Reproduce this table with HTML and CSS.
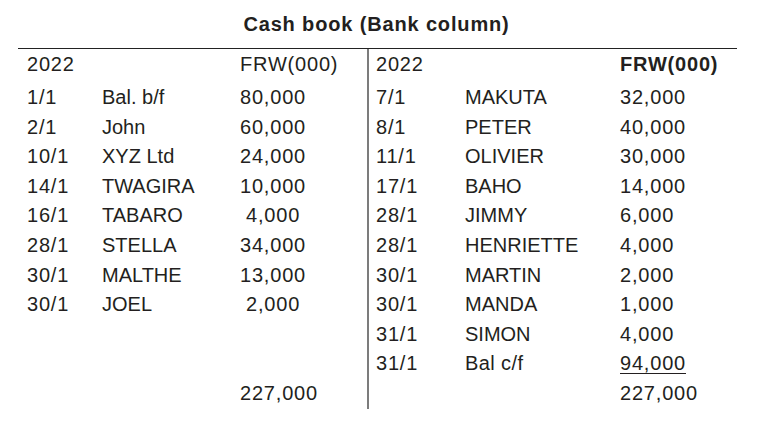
FILE: index.html
```html
<!DOCTYPE html>
<html lang="en">
<head>
<meta charset="utf-8">
<title>Cash book (Bank column)</title>
<link rel="stylesheet" href="styles.css">
</head>
<body>
<div class="page">
  <h1 class="title">Cash book (Bank column)</h1>
  <div class="ledger">
    <div class="side debit">
      <div class="row head"><span class="num">2022</span><span></span><span class="num">FRW(000)</span></div>
      <div class="row"><span class="num">1/1</span><span>Bal. b/f</span><span class="num">80,000</span></div>
      <div class="row"><span class="num">2/1</span><span>John</span><span class="num">60,000</span></div>
      <div class="row"><span class="num">10/1</span><span>XYZ Ltd</span><span class="num">24,000</span></div>
      <div class="row"><span class="num">14/1</span><span>TWAGIRA</span><span class="num">10,000</span></div>
      <div class="row"><span class="num">16/1</span><span>TABARO</span><span class="num short">4,000</span></div>
      <div class="row"><span class="num">28/1</span><span>STELLA</span><span class="num">34,000</span></div>
      <div class="row"><span class="num">30/1</span><span>MALTHE</span><span class="num">13,000</span></div>
      <div class="row"><span class="num">30/1</span><span>JOEL</span><span class="num short">2,000</span></div>
      <div class="row"><span></span><span></span><span></span></div>
      <div class="row"><span></span><span></span><span></span></div>
      <div class="row"><span></span><span></span><span class="num">227,000</span></div>
    </div>
    <div class="side credit">
      <div class="row head"><span class="num">2022</span><span></span><span class="num bold">FRW(000)</span></div>
      <div class="row"><span class="num">7/1</span><span>MAKUTA</span><span class="num">32,000</span></div>
      <div class="row"><span class="num">8/1</span><span>PETER</span><span class="num">40,000</span></div>
      <div class="row"><span class="num">11/1</span><span>OLIVIER</span><span class="num">30,000</span></div>
      <div class="row"><span class="num">17/1</span><span>BAHO</span><span class="num">14,000</span></div>
      <div class="row"><span class="num">28/1</span><span>JIMMY</span><span class="num">6,000</span></div>
      <div class="row"><span class="num">28/1</span><span>HENRIETTE</span><span class="num">4,000</span></div>
      <div class="row"><span class="num">30/1</span><span>MARTIN</span><span class="num">2,000</span></div>
      <div class="row"><span class="num">30/1</span><span>MANDA</span><span class="num">1,000</span></div>
      <div class="row"><span class="num">31/1</span><span>SIMON</span><span class="num">4,000</span></div>
      <div class="row"><span class="num">31/1</span><span class="loose">Bal c/f</span><span class="num"><span class="under">94,000</span></span></div>
      <div class="row"><span></span><span></span><span class="num">227,000</span></div>
    </div>
  </div>
</div>
</body>
</html>
```

FILE: styles.css
```css
html, body {
  margin: 0;
  padding: 0;
  background: #ffffff;
}

body {
  font-family: "Liberation Sans", Arial, Helvetica, sans-serif;
  font-size: 20px;
  color: #231f20;
  width: 759px;
  height: 423px;
  overflow: hidden;
}

.page {
  padding-top: 13px;
}

.title {
  margin: 0 0 12px 0;
  padding-right: 6px;
  font-size: 20px;
  line-height: 23px;
  font-weight: bold;
  letter-spacing: 0.85px;
  text-align: center;
}

.ledger {
  display: flex;
  margin: 0 22px 0 18px;
  border-top: 1px solid #222222;
}

.side {
  display: flex;
  flex-direction: column;
}

.debit {
  width: 349px;
  padding-left: 9px;
  box-sizing: border-box;
}

.credit {
  flex: 1;
  border-left: 2px solid #7c7c7c;
  padding-left: 7px;
}

.row {
  display: grid;
  height: 29.6px;
  line-height: 29.6px;
  white-space: nowrap;
}

.debit .row {
  grid-template-columns: 75px 138px 1fr;
}

.credit .row {
  grid-template-columns: 89px 155px 1fr;
}

.row.head {
  padding-top: 1px;
  padding-bottom: 3.5px;
}

.num {
  letter-spacing: 0.8px;
}

.short {
  padding-left: 6px;
}

.bold {
  font-weight: bold;
}

.loose {
  letter-spacing: 0.4px;
}

.under {
  text-decoration: underline;
  text-decoration-thickness: 1px;
  text-underline-offset: 2.5px;
}
```
